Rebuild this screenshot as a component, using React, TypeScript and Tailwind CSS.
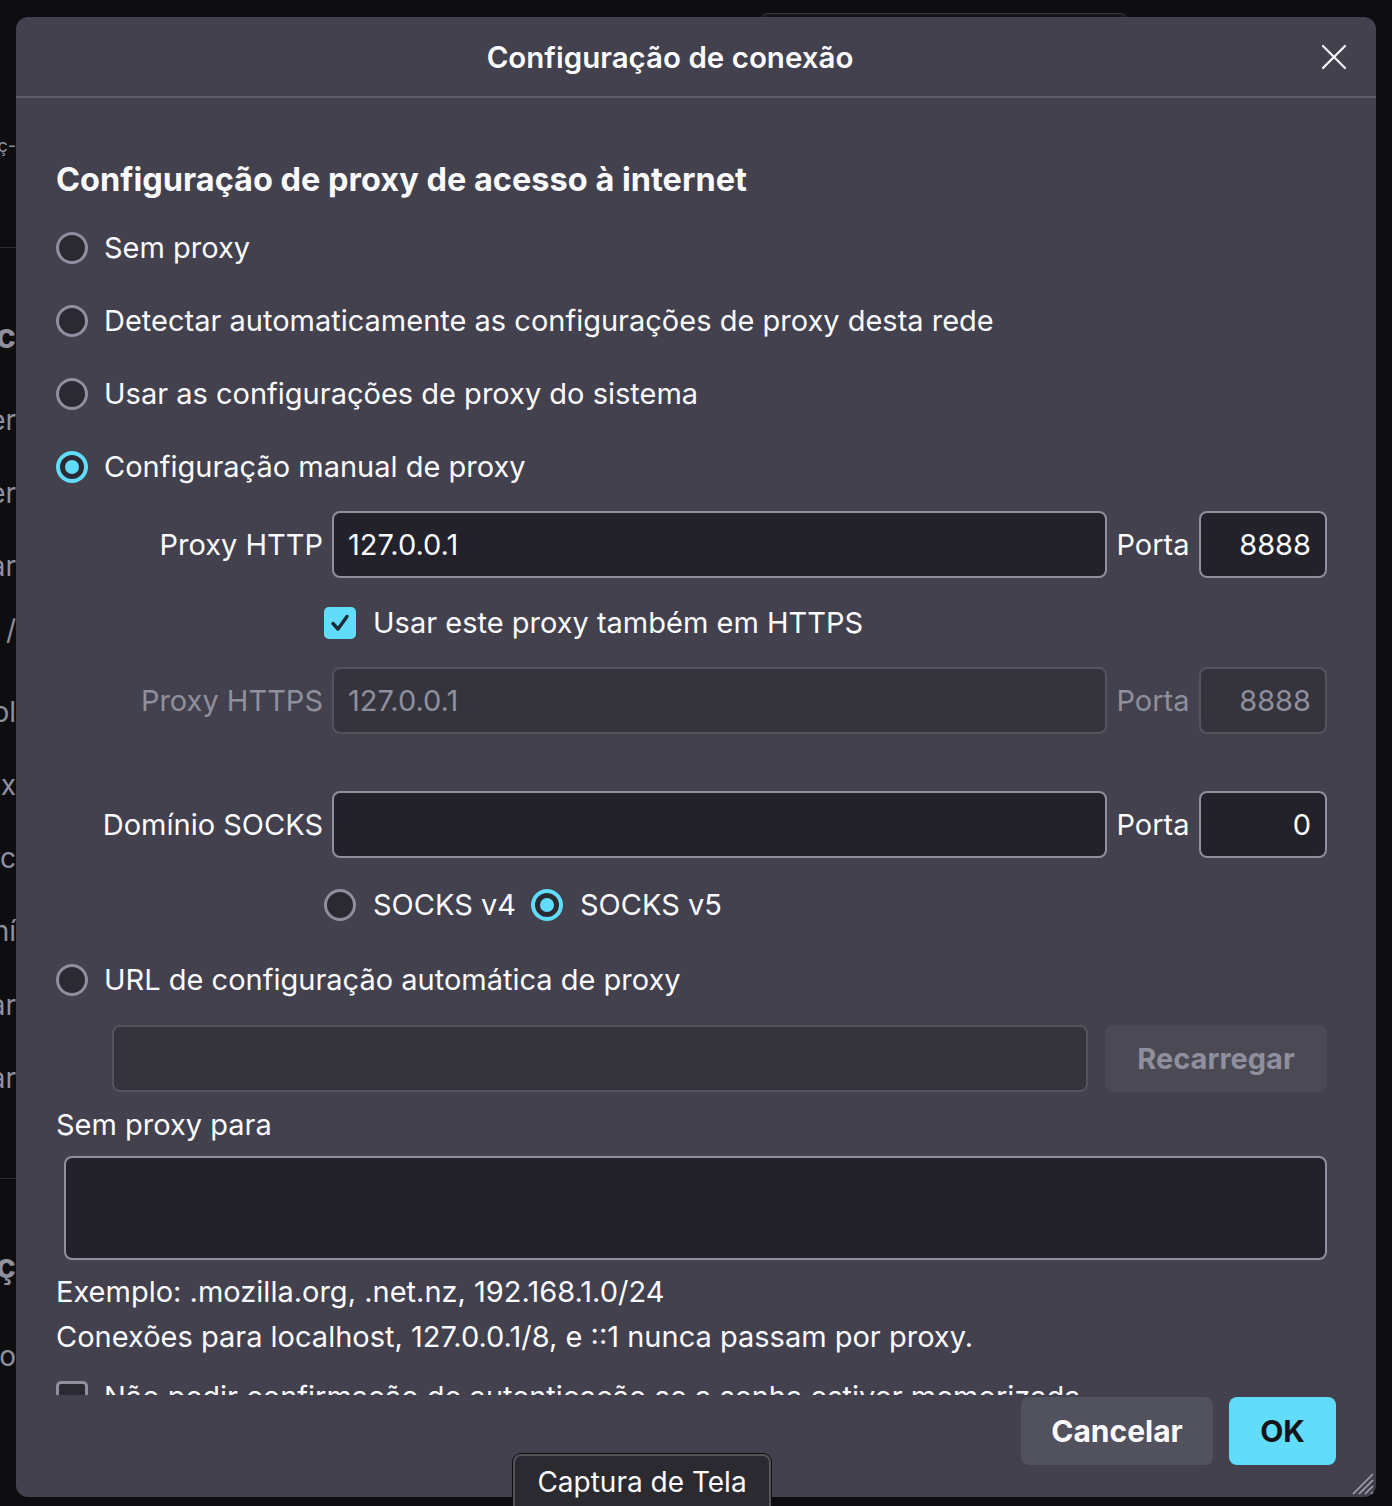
import { FC, ReactNode } from 'react';

const CYAN = 'bg-[#61dcfa]';

const Radio: FC<{ checked?: boolean }> = ({ checked }) =>
  checked ? (
    <div className="w-8 h-8 shrink-0 rounded-full border-[4px] border-[#61dcfa] bg-[#2b2a33] flex items-center justify-center">
      <div className={`w-[14px] h-[14px] rounded-full ${CYAN}`} />
    </div>
  ) : (
    <div className="w-8 h-8 shrink-0 rounded-full border-[3px] border-[#8f8f9d] bg-[#2b2a33]" />
  );

const Checkbox: FC<{ checked?: boolean }> = ({ checked }) =>
  checked ? (
    <div className={`w-8 h-8 shrink-0 rounded-[5px] ${CYAN} flex items-center justify-center`}>
      <svg width="22" height="22" viewBox="0 0 22 22" fill="none">
        <path
          d="M4 11.5 L9 17 L18 4.5"
          stroke="#1c2b33"
          strokeWidth="3.4"
          strokeLinecap="round"
          strokeLinejoin="round"
        />
      </svg>
    </div>
  ) : (
    <div className="w-8 h-8 shrink-0 rounded-[5px] border-[3px] border-[#8f8f9d] bg-[#2b2a33]" />
  );

const RadioRow: FC<{ checked?: boolean; children: ReactNode }> = ({ checked, children }) => (
  <div className="h-[73px] flex items-center gap-4">
    <Radio checked={checked} />
    <span>{children}</span>
  </div>
);

const Field: FC<{ value?: string; disabled?: boolean; className?: string; right?: boolean }> = ({
  value,
  disabled,
  className,
  right,
}) => (
  <div
    className={`h-[67px] rounded-[8px] border-2 flex items-center px-[14px] ${
      right ? 'justify-end' : ''
    } ${
      disabled
        ? 'bg-[#35343d] border-[#55545e] text-[#8f8f9d]'
        : 'bg-[#23222b] border-[#8f8f9d] text-[#fbfbfe]'
    } ${className ?? ''}`}
  >
    {value}
  </div>
);

const ProxyRow: FC<{
  label: string;
  host?: string;
  port: string;
  disabled?: boolean;
  className?: string;
}> = ({ label, host, port, disabled, className }) => (
  <div className={`flex items-center ${disabled ? 'text-[#8f8f9d]' : ''} ${className ?? ''}`}>
    <div className="w-[268px] text-right pr-[1px]">{label}</div>
    <Field value={host} disabled={disabled} className="ml-[8px] w-[775px]" />
    <div className="w-[92px] text-center">Porta</div>
    <Field value={port} disabled={disabled} right className="w-[128px]" />
  </div>
);

const Background: FC = () => {
  const bits = [
    { top: 128, text: 'ç-', cls: 'text-[18px]' },
    { top: 318, text: 'c', cls: 'text-[34px] font-bold' },
    { top: 402, text: 'er', cls: '' },
    { top: 475, text: 'er', cls: '' },
    { top: 548, text: 'ar', cls: '' },
    { top: 612, text: '/', cls: '' },
    { top: 694, text: 'ol', cls: '' },
    { top: 767, text: 'x', cls: '' },
    { top: 840, text: 'rc', cls: '' },
    { top: 913, text: 'ní', cls: '' },
    { top: 987, text: 'ar', cls: '' },
    { top: 1060, text: 'ar', cls: '' },
    { top: 1248, text: 'ç', cls: 'text-[34px] font-bold' },
    { top: 1338, text: 'no', cls: '' },
  ];
  return (
    <div className="absolute inset-0 overflow-hidden">
      <div className="absolute left-0 top-0 w-[16px] h-full overflow-hidden text-[#8f8f9d] text-[28px]">
        {bits.map((b) => (
          <div
            key={b.top}
            className={`absolute right-0 leading-[36px] whitespace-nowrap ${b.cls}`}
            style={{ top: b.top }}
          >
            {b.text}
          </div>
        ))}
        <div className="absolute left-0 w-full h-[1px] bg-[#2e2d33] top-[247px]" />
        <div className="absolute left-0 w-full h-[1px] bg-[#2e2d33] top-[1178px]" />
      </div>
      <div className="absolute left-[760px] top-[13px] w-[368px] h-[30px] rounded-[8px] border border-[#3b3a41] bg-[#16161a]" />
    </div>
  );
};

export default function App() {
  return (
    <div className="relative w-[1392px] h-[1506px] bg-[#0e0e11] overflow-hidden font-['Inter',sans-serif] text-[#fbfbfe] text-[29px] leading-[36px]">
      <Background />

      <div className="relative ml-[16px] mt-[17px] w-[1360px] h-[1480px] bg-[#42414d] rounded-[12px] flex flex-col overflow-hidden">
        {/* header */}
        <div className="h-[81px] shrink-0 flex items-center border-b-2 border-[#5c5b66]">
          <div className="flex-1 text-center text-[29.5px] font-semibold pl-[4px]">Configuração de conexão</div>
          <button className="w-[28px] h-[28px] mr-[28px] flex items-center justify-center">
            <svg width="26" height="26" viewBox="0 0 26 26" stroke="#fbfbfe" strokeWidth="2.2" strokeLinecap="round">
              <path d="M2 2 L24 24 M24 2 L2 24" />
            </svg>
          </button>
        </div>

        {/* scrolling body */}
        <div className="h-[1297px] shrink-0 overflow-hidden pl-[40px] pr-[49px] pt-[58px]">
          <h1 className="text-[32.5px] leading-[48px] font-bold">Configuração de proxy de acesso à internet</h1>
          <div className="mt-[7px]">
            <RadioRow>Sem proxy</RadioRow>
            <RadioRow>Detectar automaticamente as configurações de proxy desta rede</RadioRow>
            <RadioRow>Usar as configurações de proxy do sistema</RadioRow>
            <RadioRow checked>Configuração manual de proxy</RadioRow>
          </div>

          <ProxyRow label="Proxy HTTP" host="127.0.0.1" port="8888" className="mt-[8px]" />

          <div className="mt-[27px] ml-[268px] flex items-center gap-[17px]">
            <Checkbox checked />
            <span>Usar este proxy também em HTTPS</span>
          </div>

          <ProxyRow label="Proxy HTTPS" host="127.0.0.1" port="8888" disabled className="mt-[26px]" />

          <ProxyRow label="Domínio SOCKS" port="0" className="mt-[57px]" />

          <div className="mt-[29px] ml-[268px] flex items-center">
            <Radio />
            <span className="ml-[17px]">SOCKS v4</span>
            <div className="ml-[15px]">
              <Radio checked />
            </div>
            <span className="ml-[17px]">SOCKS v5</span>
          </div>

          <div className="mt-[39px] flex items-center gap-4">
            <Radio />
            <span>URL de configuração automática de proxy</span>
          </div>

          <div className="mt-[27px] ml-[56px] flex items-center gap-[17px]">
            <Field disabled className="flex-1" />
            <button className="w-[222px] h-[67px] rounded-[8px] bg-[#4a4954] text-[#8f8f9d] font-bold">
              Recarregar
            </button>
          </div>

          <div className="mt-[15px]">Sem proxy para</div>
          <div className="mt-[13px] ml-[8px] h-[104px] rounded-[8px] border-2 border-[#8f8f9d] bg-[#23222b]" />

          <div className="mt-[9px] leading-[45px]">
            <div>Exemplo: .mozilla.org, .net.nz, 192.168.1.0/24</div>
            <div>Conexões para localhost, 127.0.0.1/8, e ::1 nunca passam por proxy.</div>
          </div>

          <div className="mt-[20px] flex items-center gap-4">
            <Checkbox />
            <span>Não pedir confirmação de autenticação se a senha estiver memorizada</span>
          </div>
        </div>

        {/* footer */}
        <div className="mt-[2px] flex justify-end gap-4 pr-[40px]">
          <button className="w-[192px] h-[68px] rounded-[8px] bg-[#52515e] font-bold text-[30px]">Cancelar</button>
          <button className={`w-[107px] h-[68px] rounded-[8px] ${CYAN} text-[#15141a] font-bold text-[30px]`}>OK</button>
        </div>

        <svg className="absolute right-[2px] bottom-[2px]" width="26" height="26" viewBox="0 0 26 26" stroke="#a5a4ad" strokeWidth="1.6">
          <path d="M25 5 L5 25 M25 11 L11 25 M25 17 L17 25 M25 23 L23 25" />
        </svg>
      </div>

      {/* tooltip */}
      <div className="absolute left-[513px] top-[1454px] w-[258px] h-[60px] rounded-[8px] border-2 border-[#55545b] bg-[#2b2a31] outline outline-[#0e0e11] flex justify-center pt-[8px]">
        <span className="text-[28px]">Captura de Tela</span>
      </div>
    </div>
  );
}
